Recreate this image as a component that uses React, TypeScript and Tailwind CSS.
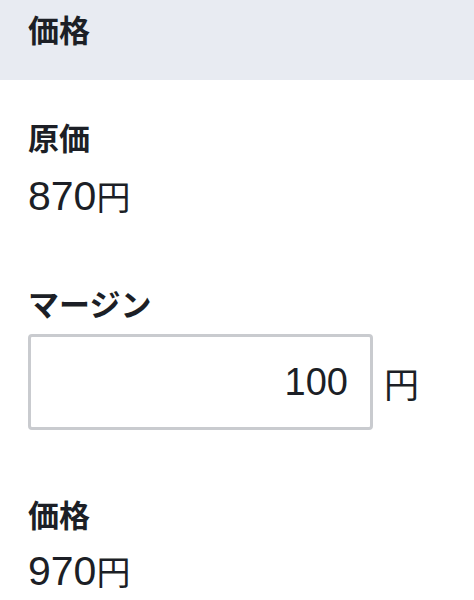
import React from "react";

function Value({ n }: { n: string }) {
  return (
    <div className="flex items-baseline leading-none text-[#1c1f26]">
      <span className="text-[41px] font-['Liberation_Sans',sans-serif]">{n}</span>
      <span className="text-[34px] font-['Noto_Sans_CJK_JP',sans-serif]">円</span>
    </div>
  );
}

export default function App() {
  return (
    <div className="w-[474px] h-[600px] bg-white font-['Noto_Sans_CJK_JP',sans-serif] overflow-hidden">
      <div className="h-[80px] bg-[#e8ebf2] px-[28px] pt-[13px]">
        <div className="text-[31px] leading-none font-semibold text-[#1c1f26]">価格</div>
      </div>
      <div className="px-[28px]">
        <div className="mt-[41px] text-[31px] leading-none font-semibold text-[#1c1f26]">原価</div>
        <div className="mt-[24px]">
          <Value n="870" />
        </div>
        <div className="mt-[70px] text-[31px] leading-none font-semibold text-[#1c1f26]">マージン</div>
        <div className="mt-[16px] flex items-center">
          <div className="w-[345px] h-[96px] border-[3px] border-[#c9cbcf] rounded-[4px] flex items-center justify-end pr-[22px]">
            <span className="text-[38px] leading-none text-[#1c1f26] font-['Liberation_Sans',sans-serif]">100</span>
          </div>
          <span className="ml-[11px] text-[35px] leading-none text-[#1c1f26] font-['Noto_Sans_CJK_JP',sans-serif]">円</span>
        </div>
        <div className="mt-[68px] text-[31px] leading-none font-semibold text-[#1c1f26]">価格</div>
        <div className="mt-[22px]">
          <Value n="970" />
        </div>
      </div>
    </div>
  );
}
